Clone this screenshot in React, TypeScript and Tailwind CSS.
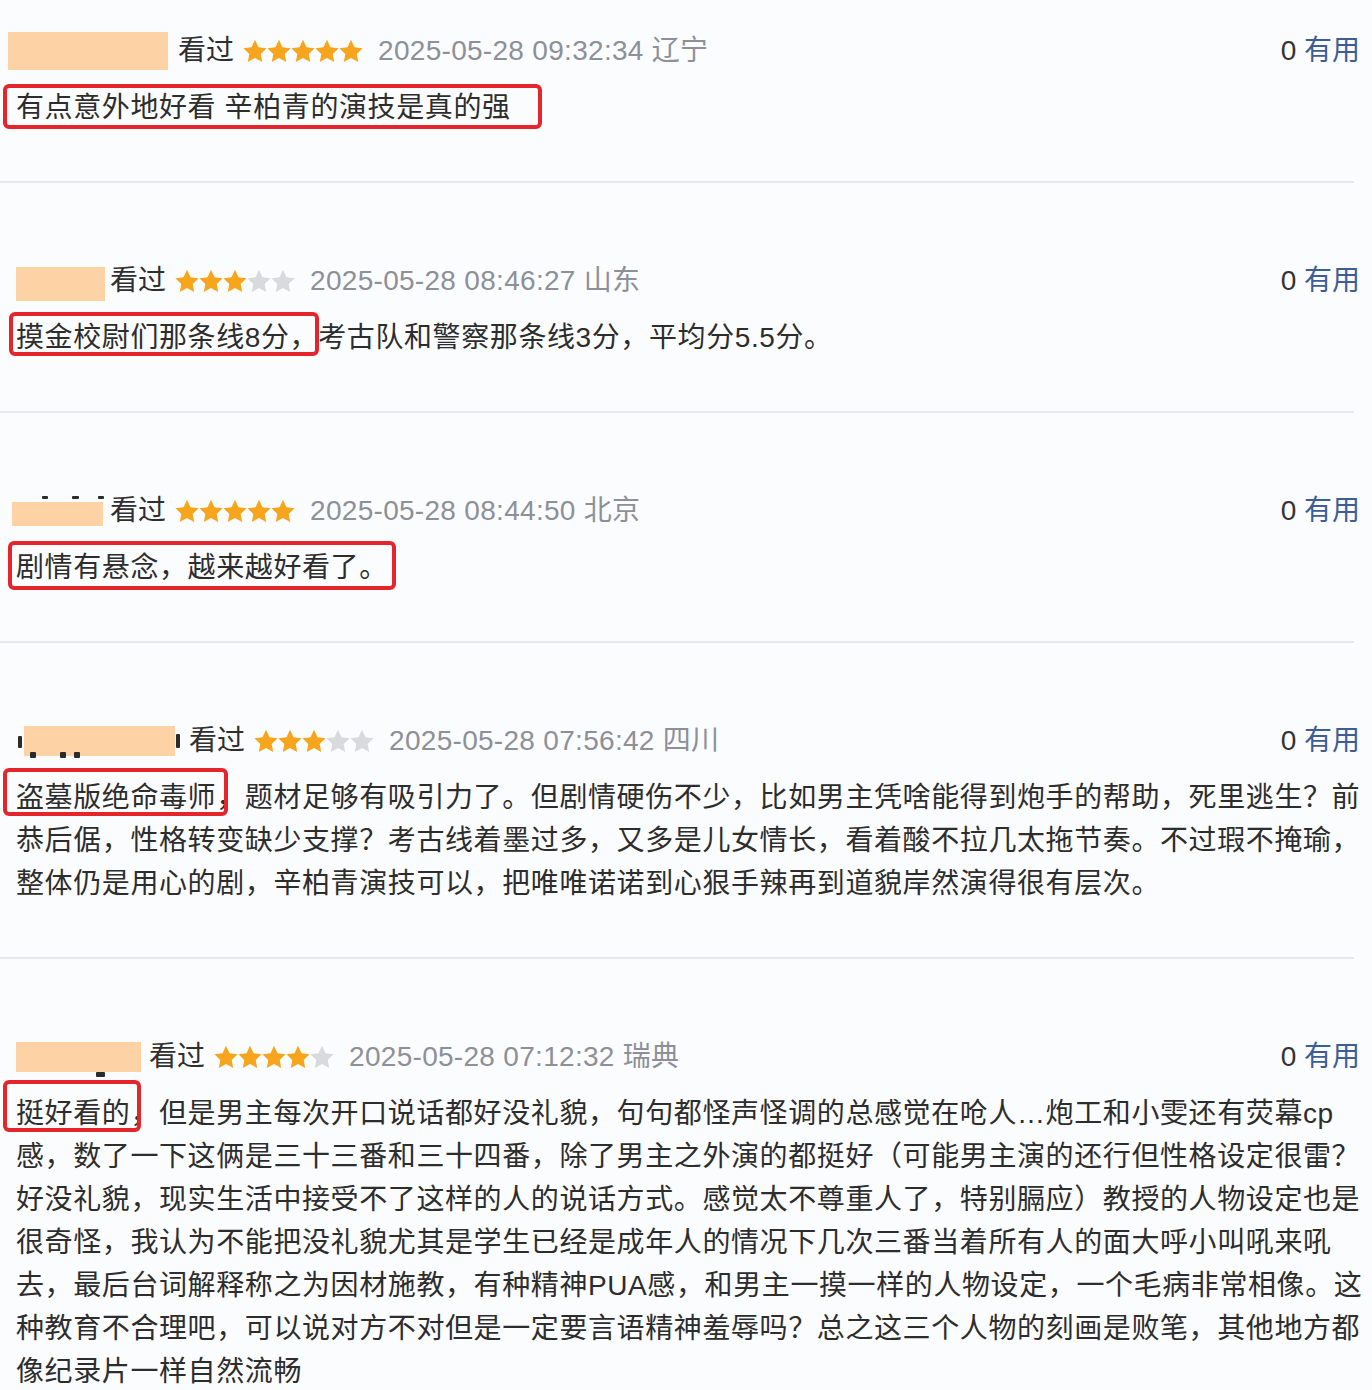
const FONT = '"Liberation Sans", "Noto Sans CJK SC", sans-serif';

type Mark = { cls: string };

type Review = {
  nameWrap: string;
  nameBox: string;
  gap: string;
  marks: Mark[];
  stars: number;
  time: string;
  place: string;
  pad: string;
  boxText: string;
  boxCls: string;
  lines: string[];
};

const reviews: Review[] = [
  {
    nameWrap: 'ml-[8px]',
    nameBox: 'w-[160px] h-[38px]',
    gap: 'ml-[10px]',
    marks: [],
    stars: 5,
    time: '2025-05-28 09:32:34',
    place: '辽宁',
    pad: 'pt-[29px]',
    boxText: '有点意外地好看 辛柏青的演技是真的强',
    boxCls: 'left-[3px] -top-[2px] w-[539px] h-[45px]',
    lines: [''],
  },
  {
    nameWrap: 'ml-[16px] mt-[6px]',
    nameBox: 'w-[89px] h-[34px]',
    gap: 'ml-[5px]',
    marks: [],
    stars: 3,
    time: '2025-05-28 08:46:27',
    place: '山东',
    pad: 'pt-[76px]',
    boxText: '摸金校尉们那条线8分，',
    boxCls: 'left-[9px] -top-[4px] w-[310px] h-[44px]',
    lines: ['考古队和警察那条线3分，平均分5.5分。'],
  },
  {
    nameWrap: 'ml-[12px]',
    nameBox: 'w-[91px] h-[24px] mt-[6px]',
    gap: 'ml-[7px]',
    marks: [
      { cls: 'left-[30px] top-[0px] w-[6px] h-[3px]' },
      { cls: 'left-[60px] top-[0px] w-[7px] h-[3px]' },
      { cls: 'left-[86px] top-[0px] w-[6px] h-[3px]' },
    ],
    stars: 5,
    time: '2025-05-28 08:44:50',
    place: '北京',
    pad: 'pt-[76px]',
    boxText: '剧情有悬念，越来越好看了。',
    boxCls: 'left-[8px] -top-[5px] w-[388px] h-[49px]',
    lines: [''],
  },
  {
    nameWrap: 'ml-[24px]',
    nameBox: 'w-[151px] h-[30px]',
    gap: 'ml-[14px]',
    marks: [
      { cls: '-left-[6px] top-[10px] w-[4px] h-[12px]' },
      { cls: 'left-[6px] top-[26px] w-[6px] h-[6px]' },
      { cls: 'left-[36px] top-[26px] w-[6px] h-[6px]' },
      { cls: 'left-[50px] top-[26px] w-[6px] h-[6px]' },
      { cls: 'left-[152px] top-[8px] w-[4px] h-[14px]' },
    ],
    stars: 3,
    time: '2025-05-28 07:56:42',
    place: '四川',
    pad: 'pt-[76px]',
    boxText: '盗墓版绝命毒师',
    boxCls: 'left-[3px] -top-[8px] w-[225px] h-[48px]',
    lines: [
      '，题材足够有吸引力了。但剧情硬伤不少，比如男主凭啥能得到炮手的帮助，死里逃生？前',
      '恭后倨，性格转变缺少支撑？考古线着墨过多，又多是儿女情长，看着酸不拉几太拖节奏。不过瑕不掩瑜，',
      '整体仍是用心的剧，辛柏青演技可以，把唯唯诺诺到心狠手辣再到道貌岸然演得很有层次。',
    ],
  },
  {
    nameWrap: 'ml-[16px]',
    nameBox: 'w-[125px] h-[30px]',
    gap: 'ml-[8px]',
    marks: [{ cls: 'left-[80px] top-[30px] w-[9px] h-[5px]' }],
    stars: 4,
    time: '2025-05-28 07:12:32',
    place: '瑞典',
    pad: 'pt-[76px]',
    boxText: '挺好看的',
    boxCls: 'left-[3px] -top-[12px] w-[138px] h-[52px]',
    lines: [
      '，但是男主每次开口说话都好没礼貌，句句都怪声怪调的总感觉在呛人…炮工和小雯还有荧幕cp',
      '感，数了一下这俩是三十三番和三十四番，除了男主之外演的都挺好（可能男主演的还行但性格设定很雷？',
      '好没礼貌，现实生活中接受不了这样的人的说话方式。感觉太不尊重人了，特别膈应）教授的人物设定也是',
      '很奇怪，我认为不能把没礼貌尤其是学生已经是成年人的情况下几次三番当着所有人的面大呼小叫吼来吼',
      '去，最后台词解释称之为因材施教，有种精神PUA感，和男主一摸一样的人物设定，一个毛病非常相像。这',
      '种教育不合理吧，可以说对方不对但是一定要言语精神羞辱吗？总之这三个人物的刻画是败笔，其他地方都',
      '像纪录片一样自然流畅',
    ],
  },
];

function Star({ on }: { on: boolean }) {
  return (
    <svg width="24" height="24" viewBox="0 0 24 24" className="shrink-0">
      <polygon
        points="12,0.8 15.5,8.2 23.6,9.2 17.7,14.9 19.2,22.9 12,19 4.8,22.9 6.3,14.9 0.4,9.2 8.5,8.2"
        fill={on ? '#f8a51e' : '#d9dadd'}
      />
    </svg>
  );
}

function Section({ r, last }: { r: Review; last: boolean }) {
  const [first, ...rest] = r.lines;
  return (
    <div>
      <div className={`${r.pad} pb-[52px]`}>
        {/* header */}
        <div className="flex items-center h-[44px] pr-[12px]">
          <div className={`relative ${r.nameWrap}`}>
            <div className={`bg-[#fdd3a6] ${r.nameBox}`} />
            {r.marks.map((m, i) => (
              <span key={i} className={`absolute bg-[#2b2b2b] rounded-[1px] ${m.cls}`} />
            ))}
          </div>
          <span className={`${r.gap} text-[#2f2f2f]`}>看过</span>
          <div className="flex ml-[9px]">
            {[0, 1, 2, 3, 4].map((i) => (
              <Star key={i} on={i < r.stars} />
            ))}
          </div>
          <span className="ml-[15px] text-[#8d9098] tracking-[0.3px]">
            {r.time} {r.place}
          </span>
          <span className="ml-auto text-[#333]">
            0 <span className="text-[#3d5e95]">有用</span>
          </span>
        </div>

        {/* comment */}
        <div className="mt-[13px] text-[#2d2d2d] tracking-[0.6px]">
          <div className="relative h-[43px] leading-[43px] pl-[16px] whitespace-nowrap">
            <span>{r.boxText}</span>
            <span>{first}</span>
            <span
              className={`absolute border-[4px] border-[#e4252b] rounded-[6px] ${r.boxCls}`}
            />
          </div>
          {rest.map((l, i) => (
            <div key={i} className="h-[43px] leading-[43px] pl-[16px] whitespace-nowrap">
              {l}
            </div>
          ))}
        </div>
      </div>
      {!last && <div className="h-[2px] bg-[#e6e8ec] mr-[18px]" />}
    </div>
  );
}

export default function App() {
  return (
    <main
      className="w-[1372px] min-h-[1390px] bg-[#fbfcfe] text-[28px] overflow-hidden"
      style={{ fontFamily: FONT }}
    >
      {reviews.map((r, i) => (
        <Section key={i} r={r} last={i === reviews.length - 1} />
      ))}
    </main>
  );
}
